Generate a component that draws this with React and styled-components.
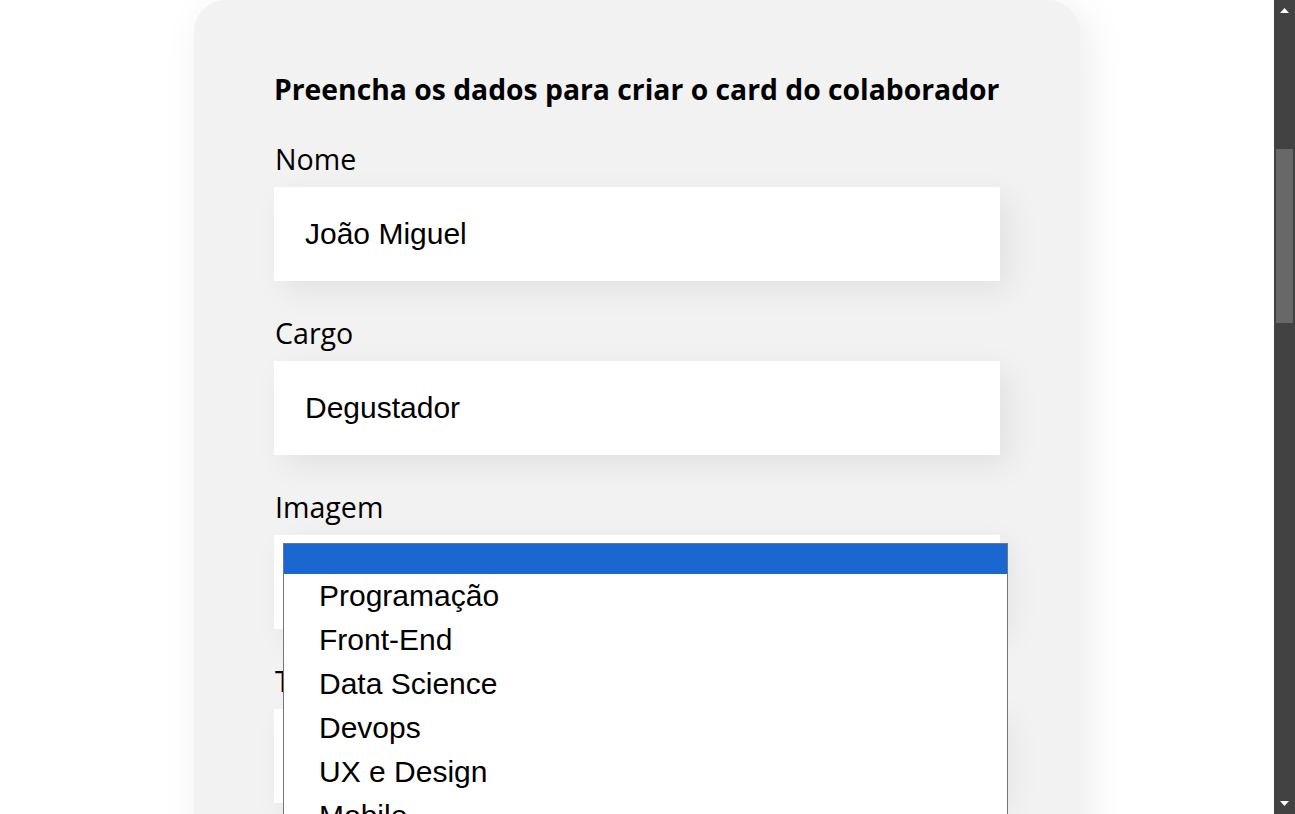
import React from 'react';
import styled, { createGlobalStyle } from 'styled-components';

const GlobalStyle = createGlobalStyle`
  html, body {
    margin: 0;
    padding: 0;
    background: #fff;
    overflow: hidden;
  }
  * {
    box-sizing: border-box;
  }
`;

const Page = styled.div`
  display: flex;
  width: 1295px;
  height: 814px;
  overflow: hidden;
`;

const Viewport = styled.main`
  flex: 1;
  height: 814px;
  overflow: hidden;
  display: flex;
  justify-content: center;
`;

const Card = styled.section`
  width: 886px;
  min-height: 1000px;
  padding: 73px 80px 60px;
  background: #f2f2f2;
  border-radius: 32px;
  box-shadow: 8px 8px 40px rgba(0, 0, 0, 0.08);
  font-family: "Open Sans", "Noto Sans", sans-serif;
  color: #000;
`;

const Title = styled.h2`
  margin: 0 0 38px;
  font-size: 28.3px;
  line-height: 32px;
  font-weight: 700;
  white-space: nowrap;
`;

const Field = styled.div`
  position: relative;
  display: flex;
  flex-direction: column;
  gap: 12px;
  margin-bottom: 36px;
`;

const Label = styled.label`
  font-size: 28.6px;
  line-height: 32px;
  font-weight: 400;
  padding-left: 1px;
`;

const Box = styled.div`
  height: 94px;
  display: flex;
  align-items: center;
  padding-left: 31px;
  background: #fff;
  box-shadow: 10px 10px 30px rgba(0, 0, 0, 0.07);
  font-family: "Liberation Sans", Arial, sans-serif;
  font-size: 30px;
`;

const Popup = styled.ul`
  position: absolute;
  left: 9px;
  top: 52px;
  width: 725px;
  margin: 0;
  padding: 0;
  list-style: none;
  background: #fff;
  border: 1px solid #767676;
  font-family: "Liberation Sans", Arial, sans-serif;
  font-size: 30px;
  z-index: 2;
`;

const Option = styled.li`
  display: flex;
  align-items: center;
  height: ${p => (p.$blank ? '30px' : '44px')};
  padding-left: 35px;
  background: ${p => (p.$active ? '#1a67d2' : '#fff')};
  color: ${p => (p.$active ? '#fff' : '#000')};
`;

const Scrollbar = styled.div`
  width: 21px;
  height: 814px;
  background: #424242;
  display: flex;
  flex-direction: column;
  align-items: center;
`;

const Arrow = styled.div`
  height: 21px;
  width: 21px;
  display: flex;
  align-items: center;
  justify-content: center;
`;

const Track = styled.div`
  flex: 1;
  width: 100%;
  padding: 128px 2px 0;
`;

const Thumb = styled.div`
  height: 174px;
  background: #686868;
`;

const teams = [
  'Programação',
  'Front-End',
  'Data Science',
  'Devops',
  'UX e Design',
  'Mobile',
  'Inovação e Gestão',
];

const App = () => {
  return (
    <>
      <GlobalStyle />
      <Page>
        <Viewport>
          <Card>
            <Title>Preencha os dados para criar o card do colaborador</Title>
            <Field>
              <Label>Nome</Label>
              <Box>João Miguel</Box>
            </Field>
            <Field>
              <Label>Cargo</Label>
              <Box>Degustador</Box>
            </Field>
            <Field>
              <Label>Imagem</Label>
              <Box />
              <Popup>
                <Option $blank $active />
                {teams.map(t => (
                  <Option key={t}>{t}</Option>
                ))}
              </Popup>
            </Field>
            <Field>
              <Label>Time</Label>
              <Box />
            </Field>
          </Card>
        </Viewport>
        <Scrollbar>
          <Arrow>
            <svg width="9" height="5" viewBox="0 0 9 5">
              <path d="M0 5 L4.5 0 L9 5 Z" fill="#fff" />
            </svg>
          </Arrow>
          <Track>
            <Thumb />
          </Track>
          <Arrow>
            <svg width="9" height="5" viewBox="0 0 9 5">
              <path d="M0 0 L4.5 5 L9 0 Z" fill="#fff" />
            </svg>
          </Arrow>
        </Scrollbar>
      </Page>
    </>
  );
};

export default App;
